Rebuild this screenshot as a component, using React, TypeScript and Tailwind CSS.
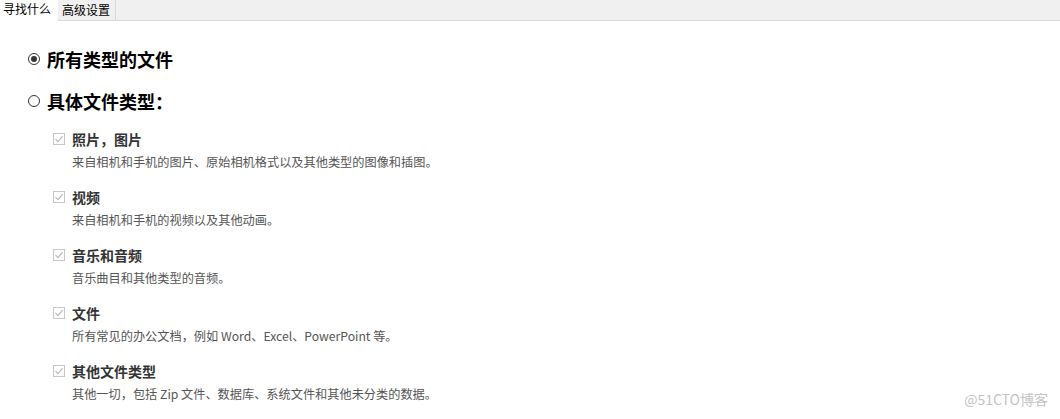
import React from "react";

const font = { fontFamily: '"Microsoft YaHei", "Noto Sans CJK SC", "Noto Sans", sans-serif' };

function Check() {
  return (
    <span className="w-[12px] h-[12px] border border-[#c8c8c8] bg-white flex items-center justify-center shrink-0">
      <svg width="10" height="10" viewBox="0 0 10 10">
        <path d="M1.5 5.2 L4 7.6 L8.6 2.2" fill="none" stroke="#b5b5b5" strokeWidth="1.1" />
      </svg>
    </span>
  );
}

const items = [
  ["照片，图片", "来自相机和手机的图片、原始相机格式以及其他类型的图像和插图。"],
  ["视频", "来自相机和手机的视频以及其他动画。"],
  ["音乐和音频", "音乐曲目和其他类型的音频。"],
  ["文件", "所有常见的办公文档，例如 Word、Excel、PowerPoint 等。"],
  ["其他文件类型", "其他一切，包括 Zip 文件、数据库、系统文件和其他未分类的数据。"],
];

export default function App() {
  return (
    <div className="w-[1060px] h-[419px] bg-white relative overflow-hidden" style={font}>
      <div className="flex h-[21px] text-[12px] text-black">
        <div className="w-[58px] bg-white flex items-center pl-[3px] pb-[4px]">寻找什么</div>
        <div className="w-[58px] bg-[#f0f0f0] border-b border-r border-[#d9d9d9] flex items-center pl-[4px]">高级设置</div>
        <div className="flex-1 bg-[#f0f0f0] border-b border-[#d9d9d9]" />
      </div>
      <div className="pl-[28px] pt-[27px]">
        <div className="flex items-center h-[22px] gap-[7px]">
          <span className="w-[12px] h-[12px] rounded-full border border-[#333] flex items-center justify-center">
            <span className="w-[6px] h-[6px] rounded-full bg-[#333]" />
          </span>
          <span className="text-[18px] font-bold text-black">所有类型的文件</span>
        </div>
        <div className="flex items-center h-[22px] gap-[7px] mt-[20px]">
          <span className="w-[12px] h-[12px] rounded-full border border-[#333]" />
          <span className="text-[18px] font-bold text-black">具体文件类型：</span>
        </div>
        <div className="pl-[25px] pt-[17px] flex flex-col gap-[14px]">
          {items.map(([t, d]) => (
            <div key={t}>
              <div className="flex items-center h-[20px] gap-[7px]">
                <Check />
                <span className="text-[14px] font-bold text-[#333]">{t}</span>
              </div>
              <div className="pl-[19px] mt-[3px] h-[21px] text-[12.2px] text-[#555] flex items-center">{d}</div>
            </div>
          ))}
        </div>
      </div>
      <div className="absolute right-[12px] bottom-[9px] text-[14px] text-[#c4c4c4]">@51CTO博客</div>
    </div>
  );
}
